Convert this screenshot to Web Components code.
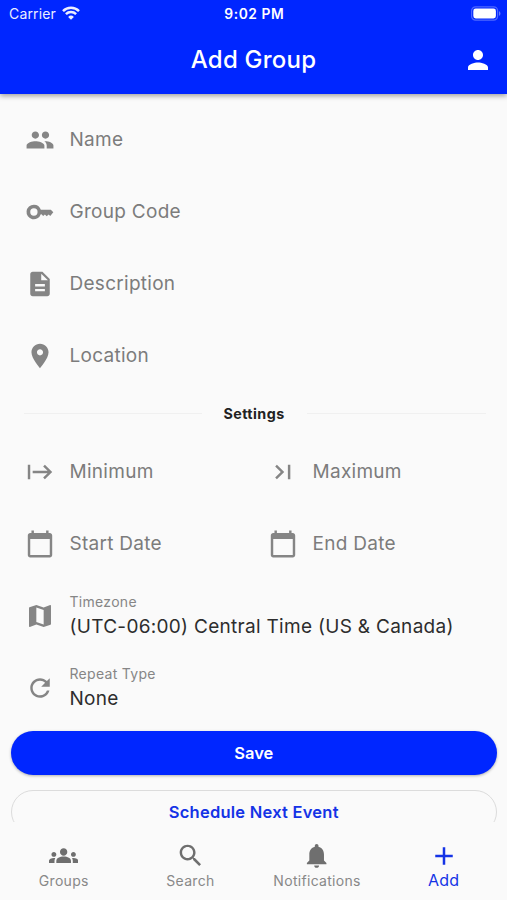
<!DOCTYPE html>
<html lang="en">
<head>
<meta charset="utf-8">
<meta name="viewport" content="width=device-width, initial-scale=1">
<title>Add Group</title>
<style>
    body {
        margin: 0;
        background: #fafafa;
        font-family: Inter, "Liberation Sans", sans-serif;
    }
</style>
</head>
<body>
<group-app></group-app>

<script>
const BLUE = '#0026ff';

// 24x24 icon paths
const ICONS = {
    people: 'M16.5 11c1.66 0 2.99-1.34 2.99-3s-1.33-3-2.99-3c-1.66 0-3 1.34-3 3s1.34 3 3 3zm-8.3 0c1.66 0 2.99-1.34 2.99-3S9.86 5 8.2 5c-1.66 0-3 1.34-3 3s1.34 3 3 3zm0 2c-2.4 0-7.2 1.2-7.2 3.5V19h14.6v-2.5c0-2.3-4.9-3.5-7.4-3.5zm8.3 0c-.29 0-.62.02-.97.05 1.16.84 1.97 1.97 1.97 3.45V19H23v-2.5c0-2.3-4.2-3.5-6.5-3.5z',
    key: 'M7 6a6 6 0 1 0 5.65 7.9H13.2l1.4 1.4L16 14l1.5 1.4 1.6-1.4 1.3 1.2L22.9 12.2 20.9 10.2H12.7A6 6 0 0 0 7 6zm0 3a3 3 0 1 1 0 6 3 3 0 0 1 0-6z',
    description: 'M14 2H6c-1.1 0-1.99.9-1.99 2L4 20c0 1.1.89 2 1.99 2H18c1.1 0 2-.9 2-2V8l-6-6zm2 16H8v-2h8v2zm0-4H8v-2h8v2zm-3-5V3.5L18.5 9H13z',
    place: 'M12 2C8.13 2 5 5.13 5 9c0 5.25 7 13 7 13s7-7.75 7-13c0-3.87-3.13-7-7-7zm0 9.5c-1.38 0-2.5-1.12-2.5-2.5s1.12-2.5 2.5-2.5 2.5 1.12 2.5 2.5-1.12 2.5-2.5 2.5z',
    start: 'M14.59 7.41 18.17 11H6v2h12.17l-3.59 3.59L16 18l6-6-6-6zM2 6v12h2V6z',
    last: 'M5.59 7.41 10.18 12l-4.59 4.59L7 18l6-6-6-6zM16 6h2v12h-2z',
    calendar: 'M20 3h-1V1h-2v2H7V1H5v2H4c-1.1 0-2 .9-2 2v16c0 1.1.9 2 2 2h16c1.1 0 2-.9 2-2V5c0-1.1-.9-2-2-2zm0 18H4V8h16v13z',
    map: 'M20.5 3l-.16.03L15 5.1 9 3 3.36 4.9c-.21.07-.36.25-.36.48V20.5c0 .28.22.5.5.5l.16-.03L9 18.9l6 2.1 5.64-1.9c.21-.07.36-.25.36-.48V3.5c0-.28-.22-.5-.5-.5zM15 19l-6-2.11V5l6 2.11V19z',
    refresh: 'M17.65 6.35C16.2 4.9 14.21 4 12 4c-4.42 0-7.99 3.58-7.99 8s3.57 8 7.99 8c3.73 0 6.84-2.55 7.73-6h-2.08c-.82 2.33-3.04 4-5.65 4-3.31 0-6-2.69-6-6s2.69-6 6-6c1.66 0 3.14.69 4.22 1.78L13 11h7V4l-2.35 2.35z',
    person: 'M12 12c2.21 0 4-1.79 4-4s-1.79-4-4-4-4 1.79-4 4 1.79 4 4 4zm0 2c-2.67 0-8 1.34-8 4v2h16v-2c0-2.66-5.33-4-8-4z',
    groups: 'M12 12.75c1.63 0 3.07.39 4.24.9 1.08.48 1.76 1.56 1.76 2.73V18H6v-1.61c0-1.18.68-2.26 1.76-2.73 1.17-.52 2.61-.91 4.24-.91zM4 13c1.1 0 2-.9 2-2s-.9-2-2-2-2 .9-2 2 .9 2 2 2zm1.13 1.1c-.37-.06-.74-.1-1.13-.1-.99 0-1.93.21-2.78.58C.48 14.9 0 15.62 0 16.43V18h4.5v-1.61c0-.83.23-1.61.63-2.29zM20 13c1.1 0 2-.9 2-2s-.9-2-2-2-2 .9-2 2 .9 2 2 2zm4 3.43c0-.81-.48-1.53-1.22-1.85-.85-.37-1.79-.58-2.78-.58-.39 0-.76.04-1.13.1.4.68.63 1.46.63 2.29V18H24v-1.57zM12 6c1.66 0 3 1.34 3 3s-1.34 3-3 3-3-1.34-3-3 1.34-3 3-3z',
    search: 'M15.5 14h-.79l-.28-.27C15.41 12.59 16 11.11 16 9.5 16 5.91 13.09 3 9.5 3S3 5.91 3 9.5 5.91 16 9.5 16c1.61 0 3.09-.59 4.23-1.57l.27.28v.79l5 4.99L20.49 19l-4.99-5zm-6 0C7.01 14 5 11.99 5 9.5S7.01 5 9.5 5 14 7.01 14 9.5 11.99 14 9.5 14z',
    bell: 'M12 22c1.1 0 2-.9 2-2h-4c0 1.1.89 2 2 2zm6-6v-5c0-3.07-1.64-5.64-4.5-6.32V4c0-.83-.67-1.5-1.5-1.5s-1.5.67-1.5 1.5v.68C7.63 5.36 6 7.92 6 11v5l-2 2v1h16v-1l-2-2z',
    add: 'M19 13h-6v6h-2v-6H5v-2h6V5h2v6h6v2z'
};

class MdIcon extends HTMLElement {
    connectedCallback() {
        // inset leaves a hairline margin so the box can stay on whole pixels
        const viewBox = this.hasAttribute('inset') ? '-.29 -.29 24.58 24.58' : '0 0 24 24';
        this.attachShadow({ mode: 'open' }).innerHTML = `
            <style>
                :host { display: block; width: var(--icon-size, 29.3px); height: var(--icon-size, 29.3px); }
                svg { display: block; width: 100%; height: 100%; fill: currentColor; }
            </style>
            <svg viewBox="${viewBox}"><path d="${ICONS[this.getAttribute('name')]}"/></svg>
        `;
    }
}

class StatusBar extends HTMLElement {
    connectedCallback() {
        this.attachShadow({ mode: 'open' }).innerHTML = `
            <style>
                :host { display: grid; grid-template-columns: 1fr auto 1fr; align-items: center; height: 27px; padding: 0 6.5px 0 9px; font-size: 14px; line-height: 20px; }
                .carrier { display: flex; align-items: center; gap: 6px; letter-spacing: .15px; opacity: .92; }
                .time { margin-left: -1px; font-weight: 600; font-size: 13.8px; letter-spacing: .55px; }
                svg { display: block; }
                .carrier svg { margin-top: -1px; }
                .battery { justify-self: end; margin-top: -1px; }
            </style>
            <div class="carrier">
                <span>Carrier</span>
                <svg width="18" height="14" viewBox="0 0 18 14" fill="none" stroke="#fff" stroke-width="2.5">
                    <path d="M1 5.1a11.4 11.4 0 0 1 16 0M3.9 8.2a7.3 7.3 0 0 1 10.2 0"/>
                    <path d="M9 13.8 6.1 10.9a4.1 4.1 0 0 1 5.8 0z" fill="#fff" stroke="none"/>
                </svg>
            </div>
            <span class="time">9:02 PM</span>
            <svg class="battery" width="30" height="15" viewBox="0 0 30 15">
                <rect x=".6" y=".8" width="26" height="13.4" rx="4" fill="none" stroke="#fff" stroke-opacity=".3" stroke-width="1.2"/>
                <rect x="2.3" y="2.6" width="22.6" height="9.8" rx="2.4" fill="#fff"/>
                <path d="M28 5.2c1.9.7 1.9 3.9 0 4.6z" fill="#fff" fill-opacity=".4"/>
            </svg>
        `;
    }
}

class AppHeader extends HTMLElement {
    connectedCallback() {
        this.attachShadow({ mode: 'open' }).innerHTML = `
            <style>
                :host { display: block; position: relative; z-index: 1; height: 94px; flex: none; background: ${BLUE}; color: #fff; box-shadow: 0 2px 5px rgba(0, 0, 0, .36); }
                .bar { display: grid; grid-template-columns: 1fr auto 1fr; align-items: center; height: 66px; padding: 0 14.5px; }
                h1 { grid-column: 2; margin: 0; font-size: 24px; line-height: 30px; font-weight: 500; letter-spacing: .22px; }
                md-icon { justify-self: end; --icon-size: 30px; }
            </style>
            <status-bar></status-bar>
            <div class="bar">
                <h1><slot></slot></h1>
                <md-icon name="person"></md-icon>
            </div>
        `;
    }
}

class FormField extends HTMLElement {
    connectedCallback() {
        const value = this.getAttribute('value');
        this.attachShadow({ mode: 'open' }).innerHTML = `
            <style>
                :host { display: flex; align-items: center; flex: 1; min-width: 0; height: 72px; color: #7c7c7c; }
                .icon { display: flex; justify-content: center; width: 58px; flex: none; color: #858585; --icon-size: 30px; }
                .text { display: flex; flex-direction: column; padding-left: .5px; font-size: 19px; line-height: 24px; letter-spacing: .28px; white-space: nowrap; }
                .filled .label { font-size: 14px; letter-spacing: .3px; line-height: 24px; color: #868686; }
                .value { color: #2d2d2d; line-height: 26px; letter-spacing: .3px; }
                .filled { padding-bottom: 2px; }
            </style>
            <div class="icon"><md-icon inset name="${this.getAttribute('icon')}"></md-icon></div>
            <div class="text ${value ? 'filled' : ''}">
                <span class="label"><slot></slot></span>
                ${value ? `<span class="value">${value}</span>` : ''}
            </div>
        `;
    }
}

class SectionDivider extends HTMLElement {
    connectedCallback() {
        this.attachShadow({ mode: 'open' }).innerHTML = `
            <style>
                :host { display: flex; align-items: center; gap: 21.5px; height: 43px; margin-bottom: 1px; padding: 0 11.5px 0 12.5px; font-size: 14.3px; font-weight: 700; letter-spacing: .45px; color: #222; }
                i { flex: 1; height: 1px; background: #f0f0f0; }
                span { margin: 0 .5px 0 -.5px; }
            </style>
            <i></i><span><slot></slot></span><i></i>
        `;
    }
}

class PillButton extends HTMLElement {
    connectedCallback() {
        this.attachShadow({ mode: 'open' }).innerHTML = `
            <style>
                :host { display: block; margin-left: -.5px; }
                button { display: block; box-sizing: border-box; width: 100%; height: 44px; padding: 0; border: 0; border-radius: 22px; background: ${BLUE}; color: #fff; font: 600 16.5px/44px Inter, "Liberation Sans", sans-serif; letter-spacing: .02px; box-shadow: 0 1px 3px rgba(0, 0, 0, .3); }
                :host([outlined]) button { border: 1px solid #dcdcdc; line-height: 42px; background: transparent; color: #1433e6; box-shadow: none; letter-spacing: .24px; }
            </style>
            <button><slot></slot></button>
        `;
    }
}

class NavItem extends HTMLElement {
    connectedCallback() {
        this.attachShadow({ mode: 'open' }).innerHTML = `
            <style>
                :host { display: flex; flex: 1 1 0; flex-direction: column; align-items: center; color: #6f6f6f; }
                .label { font-size: 14px; line-height: 22px; letter-spacing: .3px; color: #888; }
                :host([active]) { color: #1433e6; --icon-size: 30px; }
                :host([active]) .label { font-size: 16px; line-height: 19px; letter-spacing: .3px; color: inherit; }
            </style>
            <md-icon name="${this.getAttribute('icon')}"></md-icon>
            <span class="label"><slot></slot></span>
        `;
    }
}

class GroupApp extends HTMLElement {
    connectedCallback() {
        this.attachShadow({ mode: 'open' }).innerHTML = `
            <style>
                :host { display: flex; flex-direction: column; height: 900px; overflow: hidden; }
                main { flex: 1; min-height: 0; overflow: hidden; padding: 10px 10px 0 11px; }
                .row { display: flex; }
                .actions { display: flex; flex-direction: column; gap: 15px; padding-top: 7px; }
                nav { display: flex; flex: none; box-sizing: border-box; height: 78px; padding: 19px 0 0 .5px; }
            </style>
            <app-header>Add Group</app-header>
            <main>
                <form-field icon="people">Name</form-field>
                <form-field icon="key">Group Code</form-field>
                <form-field icon="description">Description</form-field>
                <form-field icon="place">Location</form-field>
                <section-divider>Settings</section-divider>
                <div class="row">
                    <form-field icon="start">Minimum</form-field>
                    <form-field icon="last">Maximum</form-field>
                </div>
                <div class="row">
                    <form-field icon="calendar">Start Date</form-field>
                    <form-field icon="calendar">End Date</form-field>
                </div>
                <form-field icon="map" value="(UTC-06:00) Central Time (US &amp; Canada)">Timezone</form-field>
                <form-field icon="refresh" value="None">Repeat Type</form-field>
                <div class="actions">
                    <pill-button>Save</pill-button>
                    <pill-button outlined>Schedule Next Event</pill-button>
                </div>
            </main>
            <nav>
                <nav-item icon="groups">Groups</nav-item>
                <nav-item icon="search">Search</nav-item>
                <nav-item icon="bell">Notifications</nav-item>
                <nav-item icon="add" active>Add</nav-item>
            </nav>
        `;
    }
}

customElements.define('md-icon', MdIcon);
customElements.define('status-bar', StatusBar);
customElements.define('app-header', AppHeader);
customElements.define('form-field', FormField);
customElements.define('section-divider', SectionDivider);
customElements.define('pill-button', PillButton);
customElements.define('nav-item', NavItem);
customElements.define('group-app', GroupApp);
</script>
</body>
</html>
